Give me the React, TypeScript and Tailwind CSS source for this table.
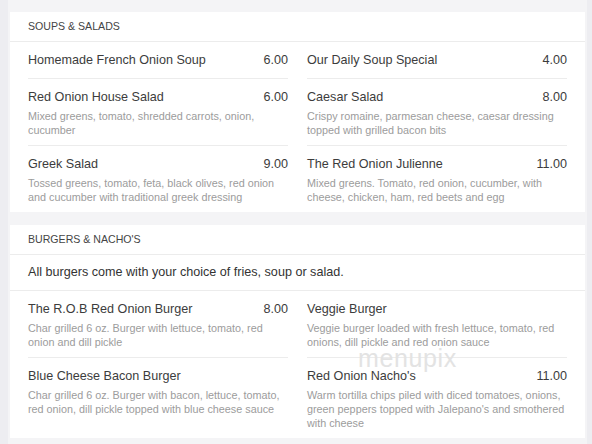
type Item = {
  name: string;
  price?: string;
  lines?: string[];
};

type Section = {
  title: string;
  intro?: string;
  items: Item[];
};

const SECTIONS: Section[] = [
  {
    title: "SOUPS & SALADS",
    items: [
      { name: "Homemade French Onion Soup", price: "6.00" },
      { name: "Our Daily Soup Special", price: "4.00" },
      {
        name: "Red Onion House Salad",
        price: "6.00",
        lines: ["Mixed greens, tomato, shredded carrots, onion,", "cucumber"],
      },
      {
        name: "Caesar Salad",
        price: "8.00",
        lines: ["Crispy romaine, parmesan cheese, caesar dressing", "topped with grilled bacon bits"],
      },
      {
        name: "Greek Salad",
        price: "9.00",
        lines: ["Tossed greens, tomato, feta, black olives, red onion", "and cucumber with traditional greek dressing"],
      },
      {
        name: "The Red Onion Julienne",
        price: "11.00",
        lines: ["Mixed greens. Tomato, red onion, cucumber, with", "cheese, chicken, ham, red beets and egg"],
      },
    ],
  },
  {
    title: "BURGERS & NACHO'S",
    intro: "All burgers come with your choice of fries, soup or salad.",
    items: [
      {
        name: "The R.O.B Red Onion Burger",
        price: "8.00",
        lines: ["Char grilled 6 oz. Burger with lettuce, tomato, red", "onion and dill pickle"],
      },
      {
        name: "Veggie Burger",
        lines: ["Veggie burger loaded with fresh lettuce, tomato, red", "onions, dill pickle and red onion sauce"],
      },
      {
        name: "Blue Cheese Bacon Burger",
        lines: ["Char grilled 6 oz. Burger with bacon, lettuce, tomato,", "red onion, dill pickle topped with blue cheese sauce"],
      },
      {
        name: "Red Onion Nacho's",
        price: "11.00",
        lines: [
          "Warm tortilla chips piled with diced tomatoes, onions,",
          "green peppers topped with Jalepano's and smothered",
          "with cheese",
        ],
      },
    ],
  },
];

function MenuItem({ item, first }: { item: Item; first: boolean }) {
  return (
    <div className={first ? "pt-2 pb-2" : "border-t border-[#ececec] pt-2 pb-2"}>
      <div className="flex items-baseline justify-between text-[12.6px] leading-5 text-[#3c3c3c]">
        <span>{item.name}</span>
        {item.price ? <span>{item.price}</span> : null}
      </div>
      {item.lines ? (
        <p className="mt-0.5 text-[10.8px] leading-[14px] text-[#9c9c9c]">
          {item.lines.map((l, i) => (
            <span key={i} className="block whitespace-nowrap">
              {l}
            </span>
          ))}
        </p>
      ) : null}
    </div>
  );
}

export default function App() {
  return (
    <div
      className="h-[444px] w-[592px] overflow-hidden bg-[#ededf1] pl-2 pr-[5px]"
      style={{ fontFamily: '"Liberation Sans", Arial, sans-serif' }}
    >
      <div className="relative flex h-full flex-col gap-[13px] bg-[#f4f4f6] px-[2px] pt-3">
        {SECTIONS.map((s) => (
          <section key={s.title} className="bg-white">
            <div className="flex h-[30px] items-center border-b border-[#ececec] px-[18px] text-[10.6px] text-[#444]">
              {s.title}
            </div>
            {s.intro ? (
              <div className="flex h-9 items-center border-b border-[#ececec] px-[18px] text-[12.6px] text-[#333]">
                {s.intro}
              </div>
            ) : null}
            <div className="grid grid-cols-2 gap-x-[19px] px-[18px]">
              {s.items.map((it, i) => (
                <MenuItem key={it.name} item={it} first={i < 2} />
              ))}
            </div>
          </section>
        ))}
        <span className="pointer-events-none absolute left-[350px] top-[340px] text-[25px] font-thin tracking-wide text-[#e3e3e3]">
          menupix
        </span>
      </div>
    </div>
  );
}
